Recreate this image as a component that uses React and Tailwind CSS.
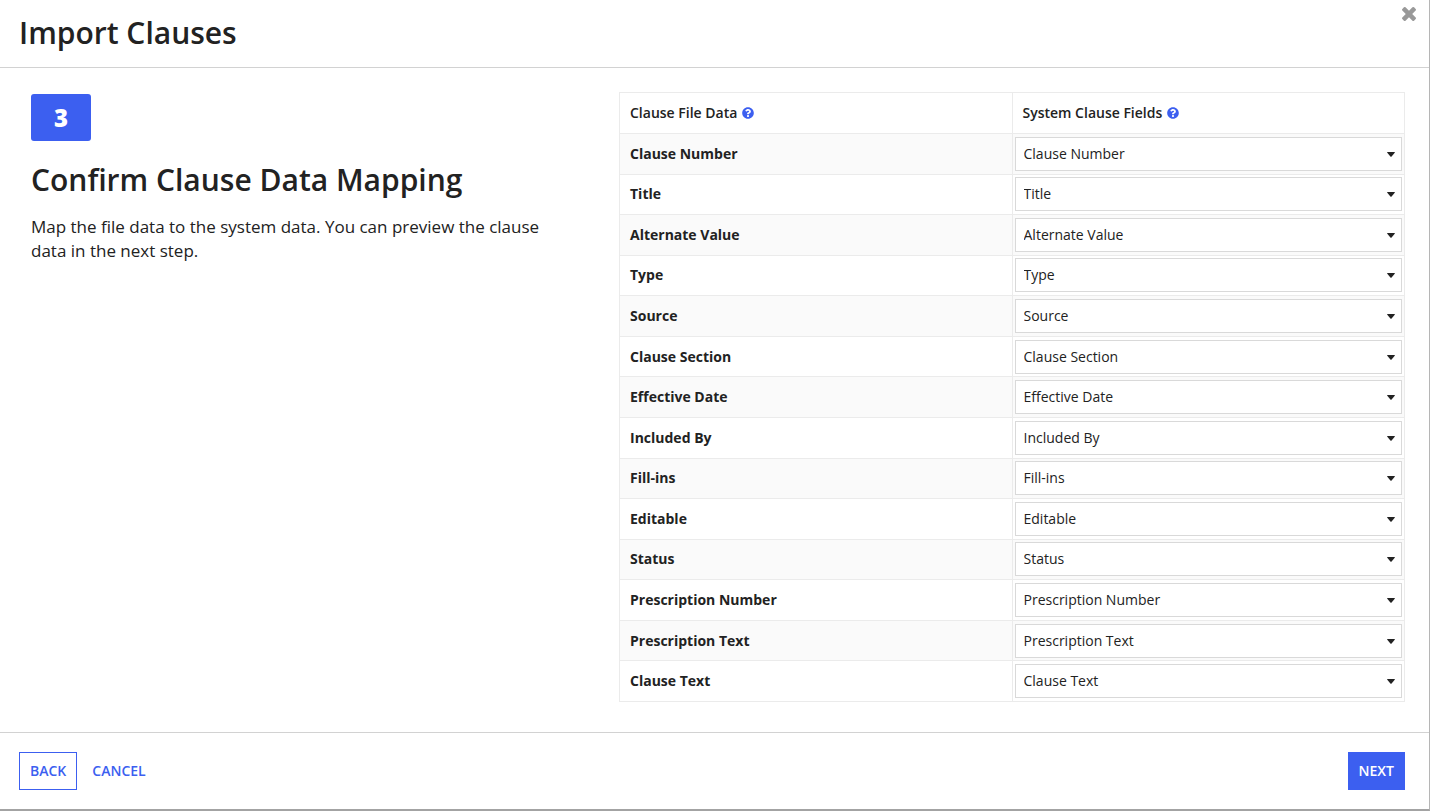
import React, { useState } from "react";
import { FaQuestionCircle } from "react-icons/fa";

const fields = [
  "Clause Number",
  "Title",
  "Alternate Value",
  "Type",
  "Source",
  "Clause Section",
  "Effective Date",
  "Included By",
  "Fill-ins",
  "Editable",
  "Status",
  "Prescription Number",
  "Prescription Text",
  "Clause Text",
];

const CloseIcon = () => (
  <svg viewBox="302 366 1188 1188" aria-hidden="true" className="w-[14px] h-[14px] fill-current">
    <path d="M1490 1322q0 40-28 68l-136 136q-28 28-68 28t-68-28l-294-294-294 294q-28 28-68 28t-68-28l-136-136q-28-28-28-68t28-68l294-294-294-294q-28-28-28-68t28-68l136-136q28-28 68-28t68 28l294 294 294-294q28-28 68-28t68 28l136 136q28 28 28 68t-28 68l-294 294 294 294q28 28 28 68z" />
  </svg>
);

const HelpButton = ({ label }) => (
  <button type="button" aria-label={label} className="text-[#3c5ff0]">
    <FaQuestionCircle className="w-3 h-3" />
  </button>
);

const FieldSelect = ({ id, value, onChange }) => (
  <div className="relative">
    <select
      id={id}
      value={value}
      onChange={onChange}
      className="block w-full h-[34px] appearance-none border border-[#d9d9d9] bg-white pl-2 pr-8 text-sm text-[#222222]">
      {fields.map((field) => (
        <option key={field} value={field}>
          {field}
        </option>
      ))}
    </select>
    <svg
      viewBox="0 0 8 5"
      aria-hidden="true"
      className="pointer-events-none absolute right-[7px] top-[15px] w-2 h-[5px] fill-[#222222]">
      <path d="M0.6 0h6.8q0.9 0 0.3 0.8L4.6 4.5q-0.6 0.6-1.2 0L0.3 0.8Q-0.3 0 0.6 0z" />
    </svg>
  </div>
);

const App = () => {
  const [mapping, setMapping] = useState(
    Object.fromEntries(fields.map((field) => [field, field]))
  );

  return (
    <div className="flex min-h-screen flex-col border-b-2 border-r border-b-[#a3a3a3] border-r-[#b5b5b5] bg-white font-['Open_Sans',sans-serif] text-[#222222]">
      <header className="relative border-b border-[#d2d2d2] px-[19px] pt-[13px] pb-[14px]">
        <h1 className="text-[30px] leading-10 font-semibold">Import Clauses</h1>
        <button
          type="button"
          aria-label="Close"
          className="absolute right-[13px] top-[7px] text-[#999999]">
          <CloseIcon />
        </button>
      </header>

      <main className="grid flex-1 grid-cols-[588fr_786fr] pt-6 pr-6 pb-[30px] pl-[31px]">
        <section className="pt-[2px] pr-12">
          <div className="flex h-[47px] w-[60px] items-center justify-center rounded-[3px] bg-[#3c5ff0] text-2xl font-extrabold text-white">
            3
          </div>
          <h2 className="mt-[19px] text-[30px] leading-10 font-semibold">
            Confirm Clause Data Mapping
          </h2>
          <p className="mt-[15px] text-[17px] leading-6">
            Map the file data to the system data. You can preview the clause
            data in the next step.
          </p>
        </section>

        <table className="h-[610px] w-full table-fixed border-collapse border border-[#ebebeb] text-sm">
          <thead>
            <tr className="h-[41px]">
              <th scope="col" className="border border-[#ebebeb] px-[10px] text-left font-semibold">
                <span className="flex items-center gap-[5px]">
                  Clause File Data
                  <HelpButton label="About clause file data" />
                </span>
              </th>
              <th scope="col" className="border border-[#ebebeb] px-[10px] text-left font-semibold">
                <span className="flex items-center gap-[5px]">
                  System Clause Fields
                  <HelpButton label="About system clause fields" />
                </span>
              </th>
            </tr>
          </thead>
          <tbody>
            {fields.map((field, index) => (
              <tr key={field} className="odd:bg-[#fafafa]">
                <td className="border border-[#ebebeb] px-[10px] font-bold">
                  <label htmlFor={`field-${index}`}>{field}</label>
                </td>
                <td className="border border-[#ebebeb] px-[2px]">
                  <FieldSelect
                    id={`field-${index}`}
                    value={mapping[field]}
                    onChange={(e) =>
                      setMapping({ ...mapping, [field]: e.target.value })
                    }
                  />
                </td>
              </tr>
            ))}
          </tbody>
        </table>
      </main>

      <footer className="flex items-center justify-between border-t border-[#d2d2d2] py-[19px] pr-6 pl-[19px] text-sm font-semibold">
        <div className="flex items-center gap-[15px]">
          <button
            type="button"
            className="h-[38px] border border-[#3c5ff0] px-[10px] text-[#3c5ff0]">
            BACK
          </button>
          <button type="button" className="h-[38px] text-[#3c5ff0]">
            CANCEL
          </button>
        </div>
        <button type="button" className="h-[38px] bg-[#3c5ff0] px-[11px] text-white">
          NEXT
        </button>
      </footer>
    </div>
  );
};

export default App;
